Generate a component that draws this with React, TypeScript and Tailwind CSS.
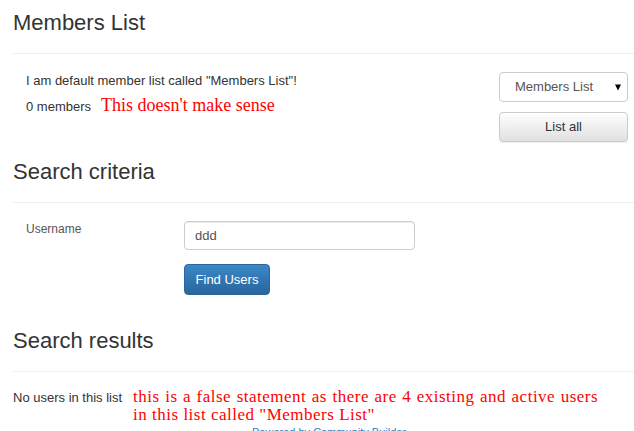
import React from 'react';

// Page heading with the thin rule under it
const PageHeader = ({ title, className }: { title: string; className?: string }) => (
  <h3 className={`pb-[18px] text-[22px] leading-[24px] font-normal border-b border-[#eee] ${className ?? ''}`}>
    {title}
  </h3>
);

const App: React.FC = () => {
  return (
    <div className="w-[634px] h-[431px] overflow-hidden bg-white text-[#333] font-['Liberation_Sans',Arial,sans-serif]">
      <div className="pl-[13px]">
        {/* Members List */}
        <PageHeader title="Members List" className="pt-[11px]" />
        <div className="flex pl-[13px] pr-[6px] pt-[18px]">
          <div className="flex-1">
            <p className="text-[13px] leading-[18px]">I am default member list called "Members List"!</p>
            <div className="flex items-baseline mt-[5px]">
              <span className="text-[13px] leading-[18px]">0 members</span>
              <span className="ml-[10px] text-[18px] leading-[20px] text-[#ff0000] font-['Liberation_Serif','Times_New_Roman',serif]">
                This doesn't make sense
              </span>
            </div>
          </div>
          <div className="w-[129px] flex flex-col gap-[10px]">
            <div className="h-[30px] flex items-center justify-between pl-[15px] pr-[6px] border border-[#ccc] rounded-[4px] bg-white text-[13px] text-[#555]">
              <span>Members List</span>
              <svg width="6" height="7" viewBox="0 0 6 7">
                <polygon points="0,0.5 6,0.5 3,6.5" fill="#000" />
              </svg>
            </div>
            <button className="h-[30px] flex items-center justify-center border border-[#ccc] rounded-[4px] bg-gradient-to-b from-white to-[#e0e0e0] text-[13px] text-[#333] shadow-[0_1px_1px_rgba(0,0,0,0.075)]">
              List all
            </button>
          </div>
        </div>

        {/* Search criteria */}
        <PageHeader title="Search criteria" className="mt-[18px]" />
        <div className="flex pl-[13px] pt-[18px]">
          <label className="w-[158px] text-[12px] leading-[16px] text-[#555]">Username</label>
          <div className="flex flex-col items-start">
            <div className="w-[231px] h-[29px] flex items-center pl-[10px] border border-[#ccc] rounded-[4px] text-[13px] text-[#555] shadow-[inset_0_1px_1px_rgba(0,0,0,0.075)]">
              ddd
            </div>
            <button className="mt-[14px] w-[86px] h-[31px] flex items-center justify-center border border-[#2b669c] rounded-[4px] bg-gradient-to-b from-[#3b88c8] to-[#2a659c] text-white text-[13px]">
              Find Users
            </button>
          </div>
        </div>

        {/* Search results */}
        <PageHeader title="Search results" className="mt-[34px]" />
        <div className="flex items-baseline pt-[16px]">
          <span className="text-[13px] leading-[18px] whitespace-nowrap">No users in this list</span>
          <div className="ml-[11px] w-[465px] text-[17px] leading-[18px] tracking-[0.5px] text-[#ff0000] font-['Liberation_Serif','Times_New_Roman',serif]">
            <div className="text-justify [text-align-last:justify]">
              this is a false statement as there are 4 existing and active users
            </div>
            <div>in this list called "Members List"</div>
          </div>
        </div>
        <div className="pl-[239px] text-[11px] leading-[16px] text-[#337ab7]">
          Powered by Community Builder
        </div>
      </div>
    </div>
  );
};

export default App;
